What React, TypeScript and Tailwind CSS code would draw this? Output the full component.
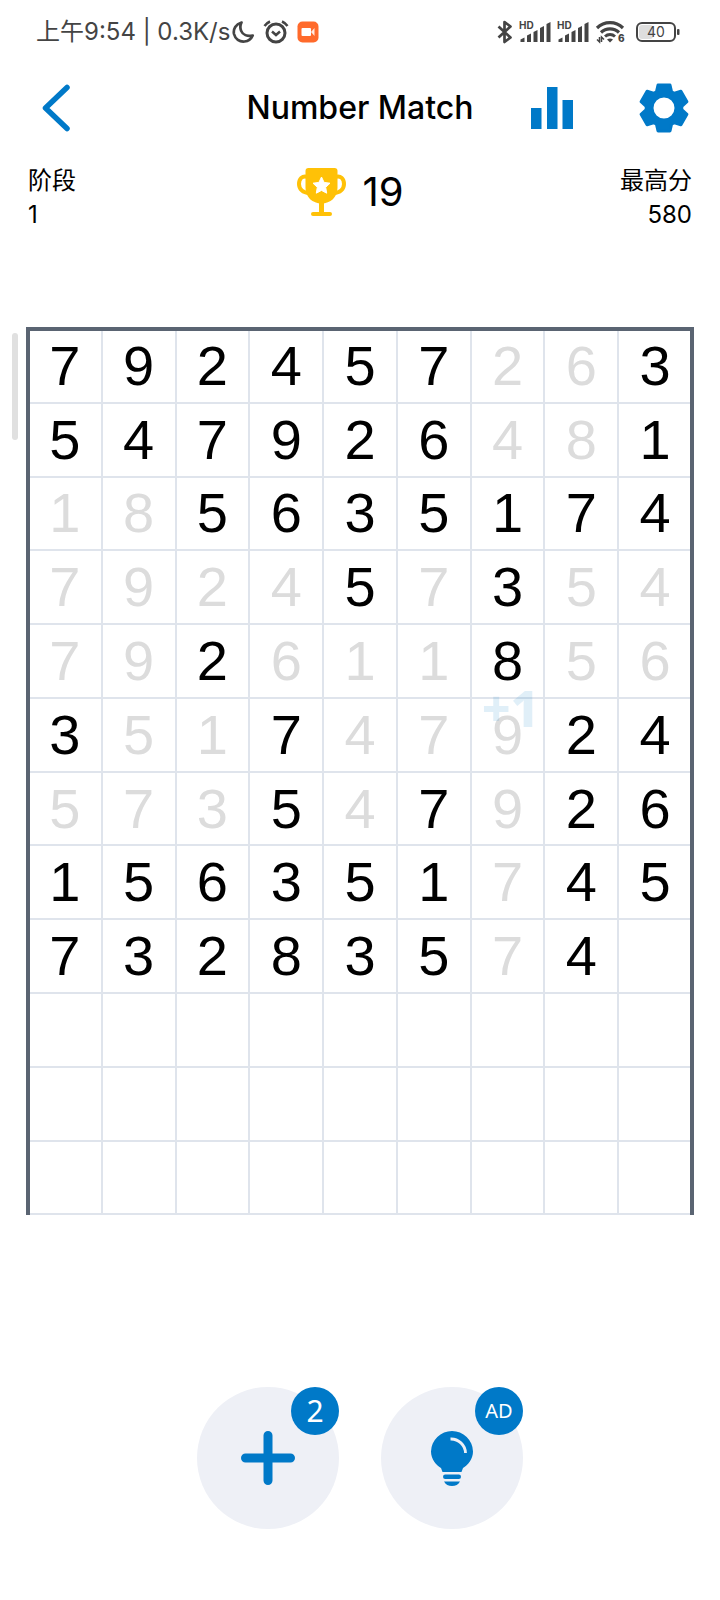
import { clsx } from 'clsx';

// A leading dot marks a number that has already been matched.
const ROWS = [
  '7 9 2 4 5 7 .2 .6 3',
  '5 4 7 9 2 6 .4 .8 1',
  '.1 .8 5 6 3 5 1 7 4',
  '.7 .9 .2 .4 5 .7 3 .5 .4',
  '.7 .9 2 .6 .1 .1 8 .5 .6',
  '3 .5 .1 7 .4 .7 .9 2 4',
  '.5 .7 .3 5 .4 7 .9 2 6',
  '1 5 6 3 5 1 .7 4 5',
  '7 3 2 8 3 5 .7 4',
  '',
  '',
  '',
];

const COLUMNS = 9;

type Cell = { value: string; matched: boolean };

const board: Cell[][] = ROWS.map((row) => {
  const items = row.split(' ');
  return Array.from({ length: COLUMNS }, (_, i) => {
    const item = items[i] ?? '';
    return { value: item.replace('.', ''), matched: item.startsWith('.') };
  });
});

const gain = { row: 5, column: 6, label: '+1' };

function SignalIcon() {
  return (
    <svg width="32" height="24" viewBox="0 0 32 24" fill="#444" aria-hidden="true">
      <text x="0" y="9" fontSize="10" fontWeight="700" fontFamily="Inter, sans-serif">
        HD
      </text>
      <path d="M1.500 19.500l4-2V22h-4zM8 15.500l4-2V22H8zM14.500 12l4-2v12h-4zM21 8l4-2v16h-4zM27.500 4l4-2v20h-4z" />
    </svg>
  );
}

function StatusBar() {
  return (
    <div className="flex h-16 items-center justify-between pr-10 pl-9 text-[#444]">
      <div className="flex items-center">
        <span className="text-2xl whitespace-nowrap">上午9:54 | 0.3K/s</span>
        <svg className="ml-0.5" width="23" height="24" viewBox="0 0 23 24" fill="none" aria-hidden="true">
          <path
            d="M9.500 2.500C3.800 4.200 1 9 2 14c1.200 5 5.500 8 10.500 7.500 3.800-.4 6.800-2.700 8.200-6-5.500 1.200-10-.8-11.600-4.700C8 8 8.200 5 9.500 2.500z"
            stroke="currentColor"
            strokeWidth="2.700"
            strokeLinejoin="round"
          />
        </svg>
        <svg className="ml-2" width="26" height="24" viewBox="0 0 26 24" fill="none" stroke="currentColor" aria-hidden="true">
          <circle cx="13" cy="13" r="9" strokeWidth="3" />
          <path d="M9 11.500l4 3.500 4-3.500" strokeWidth="2.500" />
          <path d="M1.500 6C3 3.800 4.800 2.500 7 1.500M24.500 6C23 3.800 21.200 2.500 19 1.500" strokeWidth="2.500" />
        </svg>
        <svg className="ml-2" width="22" height="22" viewBox="0 0 22 22" aria-hidden="true">
          <rect width="21" height="21" x=".5" y=".5" rx="5" fill="#ff6a2b" />
          <rect x="4.500" y="7" width="9.500" height="8" rx="1" fill="#fff" />
          <path d="M14 11l3.500-4v8z" fill="#fff" opacity=".85" />
        </svg>
      </div>
      <div className="flex items-center gap-1.5">
        <svg width="16" height="24" viewBox="0 0 16 24" fill="none" aria-hidden="true">
          <path
            d="M1.500 6.500l12 11L7.500 22V2l6 4.500-12 11"
            stroke="currentColor"
            strokeWidth="2.700"
            strokeLinejoin="round"
          />
        </svg>
        <SignalIcon />
        <SignalIcon />
        <svg width="31" height="24" viewBox="0 0 31 24" fill="none" stroke="currentColor" aria-hidden="true">
          <path d="M2 8a18.500 18.500 0 0 1 26 0" strokeWidth="3.200" />
          <path d="M6 12.500a13 13 0 0 1 18 0" strokeWidth="3.200" />
          <path d="M10 16.500a7.500 7.500 0 0 1 10 0" strokeWidth="3" />
          <path d="M15 22.500l-3-3q3-2 6 0z" fill="currentColor" stroke="none" />
          <path d="M4.500 17v5L2 19.500M6.500 22v-5L9 19.500" strokeWidth="1.500" />
          <text x="23" y="22" fontSize="10" fontWeight="800" fill="currentColor" stroke="none" fontFamily="Inter, sans-serif">
            6
          </text>
        </svg>
        <svg className="ml-1" width="44" height="20" viewBox="0 0 44 20" aria-hidden="true">
          <rect x="3" y="3" width="14" height="14" rx="3" fill="#dedede" />
          <rect x="1" y="1" width="38" height="18" rx="5" fill="none" stroke="currentColor" strokeWidth="2" />
          <rect x="41" y="7" width="2.500" height="6" rx="1" fill="currentColor" />
          <text x="20" y="15" fontSize="14" textAnchor="middle" fill="currentColor" fontFamily="Inter, sans-serif">
            40
          </text>
        </svg>
      </div>
    </div>
  );
}

function GearIcon() {
  return (
    <svg width="50" height="50" viewBox="-25 -25 50 50" fill="#0079c8" stroke="#0079c8" aria-hidden="true">
      <circle r="14.500" fill="none" strokeWidth="8" />
      {[0, 60, 120, 180, 240, 300].map((angle) => (
        <path
          key={angle}
          d="M-6-23H6L7.500-16.500 10-14 7-12.500H-7L-10-14-7.500-16.500z"
          strokeWidth="3"
          strokeLinejoin="round"
          transform={`rotate(${angle})`}
        />
      ))}
    </svg>
  );
}

function Header() {
  return (
    <header className="grid h-[88px] grid-cols-[1fr_auto_1fr] items-center px-[31px]">
      <button type="button" aria-label="Back" className="ml-2.5 w-fit">
        <svg width="30" height="48" viewBox="0 0 30 48" fill="none" aria-hidden="true">
          <path
            d="M26 3.500L4.500 24 26 44.500"
            stroke="#0079c8"
            strokeWidth="5.500"
            strokeLinecap="round"
            strokeLinejoin="round"
          />
        </svg>
      </button>
      <h1 className="text-[32px] leading-10 font-medium whitespace-nowrap">Number Match</h1>
      <div className="flex items-center justify-end gap-[66px]">
        <button type="button" aria-label="Statistics">
          <svg width="42" height="42" viewBox="0 0 42 42" fill="#0079c8" aria-hidden="true">
            <path d="M0 21h10.500v21H0zM16 0h10.500v42H16zM31.500 13H42v29H31.500z" />
          </svg>
        </button>
        <button type="button" aria-label="Settings">
          <GearIcon />
        </button>
      </div>
    </header>
  );
}

function Trophy() {
  return (
    <svg width="49" height="49" viewBox="0 0 49 49" fill="#ffc107" aria-hidden="true">
      <path d="M11 9C5 7 2 11 2 16s4 9 10 9M38 9c6-2 9 2 9 7s-4 9-10 9" fill="none" stroke="#ffc107" strokeWidth="4" />
      <path d="M8.500 3a3 3 0 0 1 3-3h26a3 3 0 0 1 3 3v17c0 9-7 15.500-16 15.500S8.500 29 8.500 20z" />
      <path d="M22 34h5v11h-5z" />
      <rect x="14" y="44" width="21" height="4" rx="2" />
      <path
        d="M24.500 9l2.600 5.400 5.900.8-4.300 4.100 1 5.900-5.200-2.800-5.200 2.800 1-5.900-4.300-4.100 5.900-.8z"
        fill="#fff"
        stroke="#fff"
        strokeLinejoin="round"
      />
    </svg>
  );
}

function ScoreBar() {
  return (
    <section className="grid grid-cols-3 px-7 pt-3 text-2xl leading-[34px]">
      <div>
        <p>阶段</p>
        <p>1</p>
      </div>
      <div className="flex items-center justify-center gap-4 pb-3">
        <Trophy />
        <span className="w-[60px] text-[40px]">19</span>
      </div>
      <div className="text-right">
        <p>最高分</p>
        <p>580</p>
      </div>
    </section>
  );
}

function Board() {
  return (
    <div className="relative flex-1 pt-[3px] pr-px pl-[3px]">
      <table className="block font-['Liberation_Sans',Arial,sans-serif]">
        <tbody className="block">
          {board.map((cells, r) => (
            <tr key={r} className="grid grid-cols-9">
              {cells.map((cell, c) => (
                <td
                  key={c}
                  className="relative aspect-square border-r-2 border-b-2 border-[#dfe4ec] p-0"
                >
                  {cell.value && (
                    <button
                      type="button"
                      className={clsx(
                        'block size-full text-center text-[56px] leading-none',
                        cell.matched ? 'text-[#dcdcdc]' : 'text-black',
                      )}
                    >
                      {cell.value}
                    </button>
                  )}
                  {r === gain.row && c === gain.column && (
                    <span className="pointer-events-none absolute -top-4 left-2.5 font-['Noto_Sans',sans-serif] text-[50px] leading-none font-extrabold text-[#0079c8]/12">
                      {gain.label}
                    </span>
                  )}
                </td>
              ))}
            </tr>
          ))}
        </tbody>
      </table>
      {/* frame drawn over the grid lines, open at the bottom */}
      <div
        className="pointer-events-none absolute inset-0 border-x-4 border-t-4 border-[#5a6472]"
        aria-hidden="true"
      />
    </div>
  );
}

function ActionButton({
  label,
  badge,
  badgeClass,
  children,
}: {
  label: string;
  badge: string;
  badgeClass: string;
  children: React.ReactNode;
}) {
  return (
    <button
      type="button"
      aria-label={label}
      className="relative flex size-[142px] items-center justify-center rounded-full bg-[#eef0f6]"
    >
      {children}
      <span
        className={clsx(
          "absolute top-0 right-0 flex size-12 items-center justify-center rounded-full bg-[#0079c8] font-['Noto_Sans',sans-serif] leading-none text-white",
          badgeClass,
        )}
      >
        {badge}
      </span>
    </button>
  );
}

export default function App() {
  return (
    <main className="min-h-screen bg-white font-[Inter,'Noto_Sans_CJK_SC',sans-serif] text-black">
      <StatusBar />
      <Header />
      <ScoreBar />
      <div className="mt-[95px] mr-[26px] ml-3 flex items-start gap-2">
        <div className="mt-1.5 h-[107px] w-1.5 rounded-full bg-[#e0e0e0]" />
        <Board />
      </div>
      <div className="mt-[172px] flex justify-center gap-[42px] pb-[70px]">
        <ActionButton label="Add numbers" badge="2" badgeClass="text-3xl">
          <svg width="54" height="54" viewBox="0 0 54 54" aria-hidden="true">
            <path d="M27 4.500v45M4.500 27h45" stroke="#0079c8" strokeWidth="9" strokeLinecap="round" />
          </svg>
        </ActionButton>
        <ActionButton label="Hint" badge="AD" badgeClass="text-xl">
          <svg width="42" height="55" viewBox="0 0 42 55" fill="#0079c8" aria-hidden="true">
            <path d="M21 0a21 21 0 0 1 21 20.500C42 28 37 34 32 37l-1.500 4h-19L10 37C5 34 0 28 0 20.500A21 21 0 0 1 21 0z" />
            <rect x="12" y="43.500" width="18" height="4.500" rx="2.200" />
            <path d="M13 50.500h16c-1.500 3-4.500 4.500-8 4.500s-6.500-1.500-8-4.500z" />
            <path d="M19.500 8a14.500 14.500 0 0 1 15 14" fill="none" stroke="#eef0f6" strokeWidth="2.800" />
          </svg>
        </ActionButton>
      </div>
    </main>
  );
}
